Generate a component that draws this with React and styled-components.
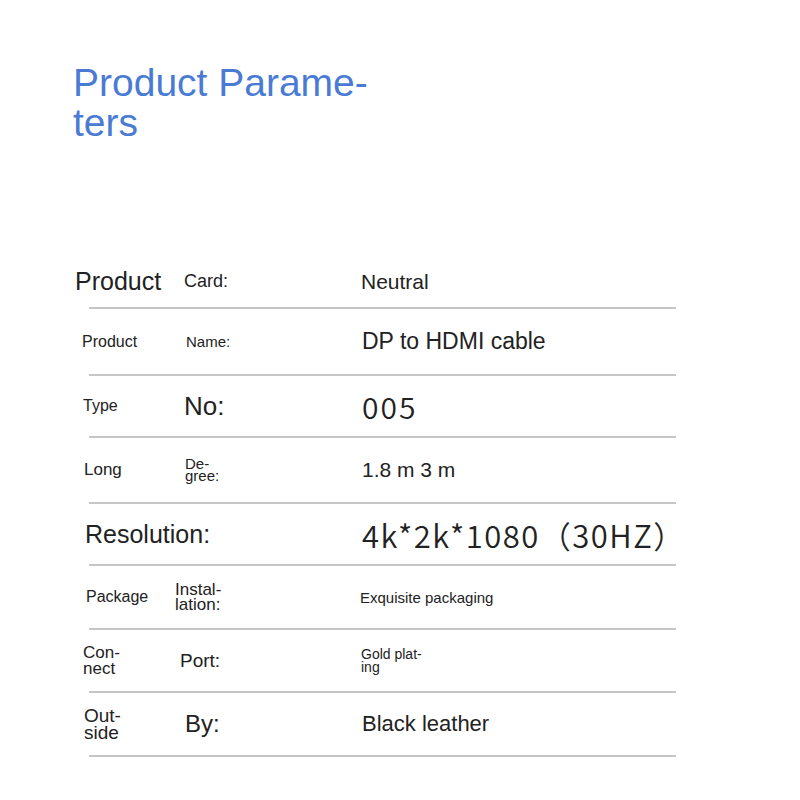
import React from 'react';
import styled, { createGlobalStyle } from 'styled-components';

const GlobalStyle = createGlobalStyle`
  html, body {
    margin: 0;
    padding: 0;
    background: #fff;
  }
  body {
    font-family: "Liberation Sans", Arial, sans-serif;
    color: #222;
  }
`;

const rows = [
  {
    height: 51,
    cells: [
      { text: 'Product', size: 25, off: 0 },
      { text: 'Card:', size: 18, off: 9 },
      { text: 'Neutral', size: 21, off: 1 },
    ],
  },
  {
    height: 65,
    cells: [
      { text: 'Product', size: 16, off: 7 },
      { text: 'Name:', size: 15, off: 11 },
      { text: 'DP to HDMI cable', size: 23, off: 2 },
    ],
  },
  {
    height: 60,
    cells: [
      { text: 'Type', size: 16, off: 8 },
      { text: 'No:', size: 26, off: 9 },
      { text: '005', size: 30, off: 2, cjk: true, track: 2 },
    ],
  },
  {
    height: 64,
    cells: [
      { text: 'Long', size: 17, off: 9 },
      { lines: ['De-', 'gree:'], size: 15, lh: 12, off: 10 },
      { text: '1.8 m 3 m', size: 21, off: 2 },
    ],
  },
  {
    height: 60,
    cells: [
      { text: 'Resolution:', size: 25, off: 10, span: 2 },
      { text: '4k*2k*1080（30HZ）', size: 31, off: 2, cjk: true, track: 1.5 },
    ],
  },
  {
    height: 62,
    cells: [
      { text: 'Package', size: 16, off: 11 },
      { lines: ['Instal-', 'lation:'], size: 17, lh: 15, off: 0 },
      { text: 'Exquisite packaging', size: 15, off: 0 },
    ],
  },
  {
    height: 61,
    cells: [
      { lines: ['Con-', 'nect'], size: 17, lh: 16, off: 8 },
      { text: 'Port:', size: 19, off: 5 },
      { lines: ['Gold plat-', 'ing'], size: 14, lh: 13, off: 1 },
    ],
  },
  {
    height: 62,
    cells: [
      { lines: ['Out-', 'side'], size: 19, lh: 17, off: 9 },
      { text: 'By:', size: 24, off: 10 },
      { text: 'Black leather', size: 22, off: 2 },
    ],
  },
];

function App() {
  return (
    <>
      <GlobalStyle />
      <Page>
        <Title>
          Product Parame-
          <br />
          ters
        </Title>

        <Table>
          {rows.map((row, i) => (
            <React.Fragment key={i}>
              <Row height={row.height}>
                {row.cells.map((c, j) => (
                  <Cell
                    key={j}
                    size={c.size}
                    off={c.off}
                    span={c.span}
                    lh={c.lh}
                    cjk={c.cjk}
                    track={c.track}
                  >
                    {c.lines
                      ? c.lines.map((l, k) => <Line key={k}>{l}</Line>)
                      : c.text}
                  </Cell>
                ))}
              </Row>
              <Divider />
            </React.Fragment>
          ))}
        </Table>
      </Page>
    </>
  );
}

const Page = styled.div`
  width: 800px;
  height: 800px;
  padding: 63px 0 0 73px;
  box-sizing: border-box;
  background: #fff;
`;

const Title = styled.h1`
  margin: 0;
  font-family: "Liberation Sans", Arial, sans-serif;
  font-weight: normal;
  font-size: 39px;
  line-height: 40px;
  color: #4a7bd4;
`;

const Table = styled.div`
  margin-top: 113px;
  margin-left: 2px;
  width: 602px;
`;

const Row = styled.div`
  display: grid;
  grid-template-columns: 100px 185px 1fr;
  align-items: center;
  height: ${(p) => p.height}px;
`;

const Cell = styled.div`
  grid-column: span ${(p) => p.span || 1};
  padding-left: ${(p) => p.off}px;
  font-size: ${(p) => p.size}px;
  line-height: ${(p) => (p.lh ? `${p.lh}px` : 'normal')};
  letter-spacing: ${(p) => p.track || 0}px;
  font-family: ${(p) =>
    p.cjk
      ? '"Noto Sans CJK SC", sans-serif'
      : '"Liberation Sans", Arial, sans-serif'};
  font-weight: ${(p) => (p.cjk ? 350 : 400)};
  color: #222;
  white-space: nowrap;
`;

const Line = styled.div``;

const Divider = styled.div`
  height: 2px;
  margin-left: 14px;
  width: 587px;
  background: #c6c6c6;
`;

export default App;
